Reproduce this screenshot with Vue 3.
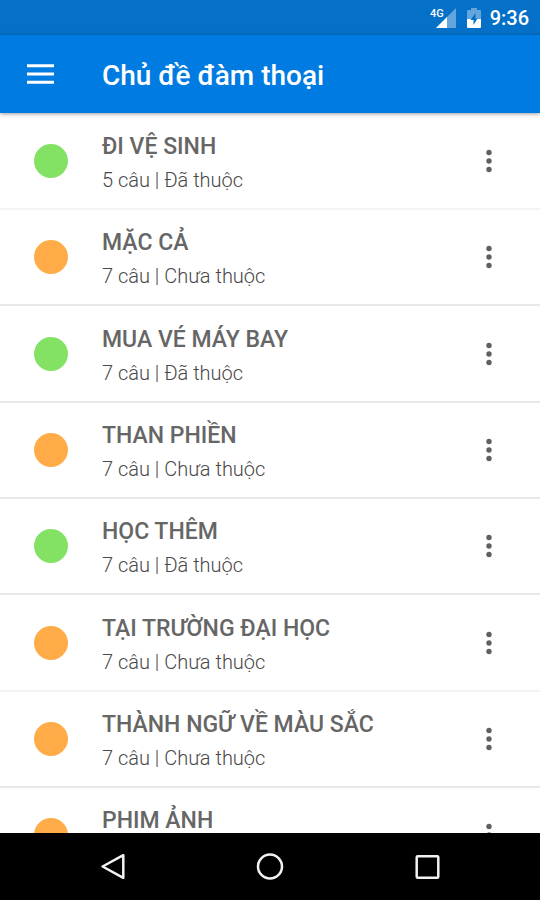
<script setup>
const topics = [
  { title: 'ĐI VỆ SINH', count: 5, learned: true },
  { title: 'MẶC CẢ', count: 7, learned: false },
  { title: 'MUA VÉ MÁY BAY', count: 7, learned: true },
  { title: 'THAN PHIỀN', count: 7, learned: false },
  { title: 'HỌC THÊM', count: 7, learned: true },
  { title: 'TẠI TRƯỜNG ĐẠI HỌC', count: 7, learned: false },
  { title: 'THÀNH NGỮ VỀ MÀU SẮC', count: 7, learned: false },
  { title: 'PHIM ẢNH', count: 7, learned: false },
]
</script>

<template>
  <div class="screen">
    <div class="status">
      <svg class="signal" viewBox="0 0 26 22" aria-hidden="true">
        <path d="M26 1V21H6Z" fill="#fff" fill-opacity=".38" />
        <path d="M17 10V21H6Z" fill="#fff" />
        <text x="0" y="10" class="network">4G</text>
      </svg>
      <svg class="battery" viewBox="0 0 14 20" aria-hidden="true">
        <path d="M4 0H10V2H13Q14 2 14 3V11H0V3Q0 2 1 2H4Z" fill="#fff" fill-opacity=".38" />
        <path d="M0 11H14V19Q14 20 13 20H1Q0 20 0 19Z" fill="#fff" />
        <path d="M8.5 5L3.5 12H6.5V17L10.5 10.5H8.5Z" fill="#0470c8" />
      </svg>
      <span class="clock">9:36</span>
    </div>

    <header class="bar">
      <button class="menu" type="button" aria-label="Menu">
        <svg viewBox="0 0 27 20"><path d="M0 1.7H27M0 10H27M0 18.3H27" stroke="#fff" stroke-width="3" /></svg>
      </button>
      <h1>Chủ đề đàm thoại</h1>
    </header>

    <ul class="list">
      <li v-for="topic in topics" :key="topic.title" class="row">
        <span class="dot" :class="{ learned: topic.learned }"></span>
        <div class="text">
          <h2>{{ topic.title }}</h2>
          <p>{{ topic.count }} câu | {{ topic.learned ? 'Đã thuộc' : 'Chưa thuộc' }}</p>
        </div>
        <button class="more" type="button" :aria-label="topic.title">
          <svg viewBox="0 0 6 24">
            <circle cx="3" cy="3.5" r="2.7" /><circle cx="3" cy="12" r="2.7" /><circle cx="3" cy="20.5" r="2.7" />
          </svg>
        </button>
      </li>
    </ul>

    <nav class="nav">
      <button type="button" aria-label="Back">
        <svg viewBox="0 0 30 30"><path d="M25.3 3.2V25.8L4.6 14.5Z" /></svg>
      </button>
      <button type="button" aria-label="Home">
        <svg viewBox="0 0 30 30"><circle cx="15" cy="14.5" r="12" /></svg>
      </button>
      <button type="button" aria-label="Recent">
        <svg viewBox="0 0 30 30"><rect x="4.7" y="4.2" width="21.6" height="21.6" rx="1" /></svg>
      </button>
    </nav>
  </div>
</template>

<style>
body {
  margin: 0;
  background: #fff;
}
</style>

<style scoped>
.screen {
  display: flex;
  flex-direction: column;
  height: 100vh;
  overflow: hidden;
  font-family: Roboto, "Noto Sans", sans-serif;
  color: #666;
}
button {
  display: flex;
  align-items: center;
  justify-content: center;
  padding: 0;
  border: 0;
  background: none;
}
svg {
  display: block;
}
h1,
h2,
p,
ul {
  margin: 0;
  padding: 0;
}
.status {
  flex: none;
  display: flex;
  align-items: center;
  justify-content: flex-end;
  height: 35px;
  padding-right: 11px;
  background: #0470c8;
  color: #fff;
}
.signal {
  width: 26px;
  height: 22px;
  margin-right: 11px;
}
.network {
  font-size: 11px;
  font-weight: 500;
  fill: #fff;
}
.battery {
  width: 14px;
  height: 20px;
  margin-right: 9px;
}
.clock {
  font-size: 20px;
  font-weight: 500;
  line-height: 24px;
  padding-top: 1px;
}
.bar {
  position: relative;
  flex: none;
  display: flex;
  align-items: center;
  height: 78px;
  background: #007be2;
  box-shadow: 0 1px 4px rgba(0, 0, 0, 0.4);
  color: #fff;
}
.menu {
  width: 80px;
  height: 78px;
  margin-right: 22px;
}
.menu svg {
  width: 27px;
  height: 20px;
}
h1 {
  padding-top: 3px;
  font-size: 28px;
  font-weight: 500;
  line-height: 32px;
}
.list {
  flex: 1;
  min-height: 0;
  padding-top: 1px;
  overflow-y: auto;
  scrollbar-width: none;
  list-style: none;
}
.row {
  display: flex;
  align-items: center;
  height: 94px;
  padding: 0 34px;
  border-bottom: 2px solid #e9e9e9;
}
.row:nth-child(3n) {
  height: 95px;
}
.row:nth-child(5n + 1) {
  border-bottom-color: #f3f3f3;
}
.dot {
  flex: none;
  width: 34px;
  height: 34px;
  margin-right: 34px;
  border-radius: 50%;
  background: #ffab48;
}
.dot.learned {
  background: #83e263;
}
.text {
  flex: 1;
  min-width: 0;
  padding-top: 6px;
}
h2 {
  font-size: 23px;
  font-weight: 500;
  line-height: 32px;
}
p {
  font-size: 20px;
  font-weight: 300;
  line-height: 34px;
  color: #484848;
}
.more {
  width: 34px;
  height: 48px;
}
.more svg {
  width: 6px;
  height: 24px;
  fill: #606060;
}
.nav {
  flex: none;
  display: flex;
  align-items: center;
  justify-content: center;
  gap: 109px;
  height: 67px;
  background: #000;
}
.nav button {
  width: 48px;
  height: 48px;
}
.nav svg {
  width: 30px;
  height: 30px;
  fill: none;
  stroke: #f2f2f2;
  stroke-width: 2.5;
  stroke-linejoin: round;
}
</style>
